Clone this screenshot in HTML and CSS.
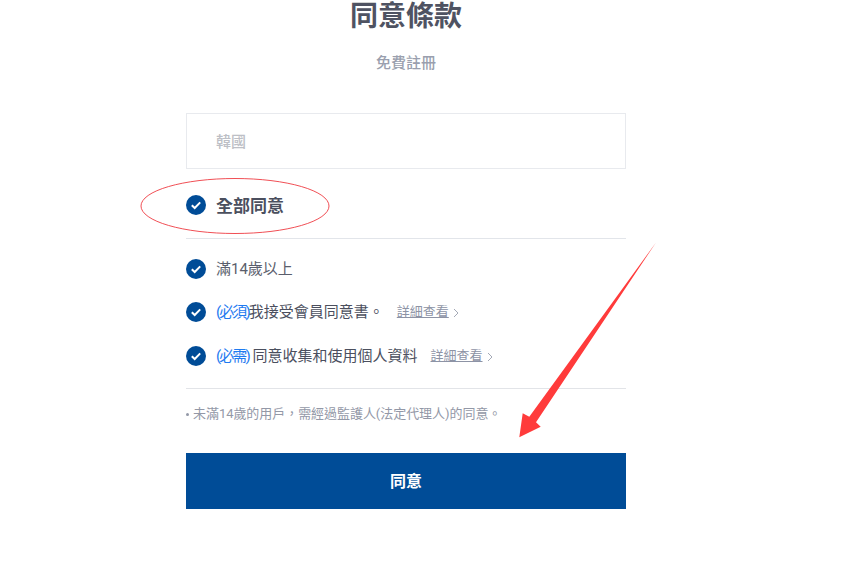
FILE: index.html
```html
<!DOCTYPE html>
<html lang="zh-Hant">
<head>
<meta charset="utf-8">
<title>同意條款</title>
<link rel="stylesheet" href="styles.css">
</head>
<body>
<main class="panel">
  <h1 class="title">同意條款</h1>
  <p class="subtitle">免費註冊</p>
  <div class="country">韓國</div>
  <div class="row row-all">
    <svg class="check" viewBox="0 0 20 20"><circle cx="10" cy="10" r="10" fill="#004c97"/><path d="M5.8 10.2l2.9 2.8 5.5-5.6" fill="none" stroke="#fff" stroke-width="2"/></svg>
    <strong class="all-label">全部同意</strong>
  </div>
  <div class="terms">
    <div class="row row-age">
      <svg class="check" viewBox="0 0 20 20"><circle cx="10" cy="10" r="10" fill="#004c97"/><path d="M5.8 10.2l2.9 2.8 5.5-5.6" fill="none" stroke="#fff" stroke-width="2"/></svg>
      <span class="label muted-label">滿14歲以上</span>
    </div>
    <div class="row row-member">
      <svg class="check" viewBox="0 0 20 20"><circle cx="10" cy="10" r="10" fill="#004c97"/><path d="M5.8 10.2l2.9 2.8 5.5-5.6" fill="none" stroke="#fff" stroke-width="2"/></svg>
      <span class="label"><span class="req">(必須)</span>我接受會員同意書。</span>
      <a class="more" href="#">詳細查看</a>
      <svg class="chev" viewBox="0 0 6 10"><path d="M1 1l4 4-4 4" fill="none" stroke="#a4a9b6"/></svg>
    </div>
    <div class="row row-data">
      <svg class="check" viewBox="0 0 20 20"><circle cx="10" cy="10" r="10" fill="#004c97"/><path d="M5.8 10.2l2.9 2.8 5.5-5.6" fill="none" stroke="#fff" stroke-width="2"/></svg>
      <span class="label"><span class="req">(必需)</span> 同意收集和使用個人資料</span>
      <a class="more" href="#">詳細查看</a>
      <svg class="chev" viewBox="0 0 6 10"><path d="M1 1l4 4-4 4" fill="none" stroke="#a4a9b6"/></svg>
    </div>
  </div>
  <p class="note"><span class="dot"></span>未滿14歲的用戶，需經過監護人(法定代理人)的同意。</p>
  <button class="submit" type="button">同意</button>
</main>
<svg class="overlay" viewBox="0 0 852 581" width="852" height="581">
  <ellipse cx="235" cy="206" rx="94" ry="27.5" fill="none" stroke="#ee3b42" stroke-width="0.9"/>
  <path d="M656 242.5L536 422.3 540.7 426.7 519.3 437.3 522.7 413.3 529.3 416.7Z" fill="#ff3b3b"/>
</svg>
</body>
</html>
```
FILE: styles.css
```css
* { box-sizing: border-box; }
html, body { margin: 0; height: 581px; overflow: hidden; background: #fff; }
body {
  font-family: Roboto, "Noto Sans CJK TC", sans-serif;
  color: #4b4f5e;
  position: relative;
}
.panel { width: 440px; margin-left: 186px; display: flex; flex-direction: column; }
.title {
  margin: 0;
  height: 30px;
  font-size: 28px;
  line-height: 33px;
  font-weight: 700;
  text-align: center;
  color: #4f5362;
}
.subtitle {
  margin: 22px 0 0;
  height: 20px;
  font-size: 15px;
  line-height: 23px;
  font-weight: 500;
  text-align: center;
  color: #9a9fae;
}
.country {
  margin-top: 41px;
  height: 56px;
  border: 1px solid #e8eaee;
  padding-left: 29px;
  font-size: 15px;
  line-height: 56px;
  font-weight: 500;
  color: #bdbfc6;
}
.row { display: flex; align-items: center; }
.check { width: 20px; height: 20px; flex: none; margin-right: 10px; }
.row-all {
  height: 70px;
  border-bottom: 1px solid #e2e5ea;
  padding-top: 3px;
}
.all-label { font-size: 17px; line-height: 20px; margin-top: 2px; font-weight: 700; color: #4b4f5e; }
.terms { display: flex; flex-direction: column; border-bottom: 1px solid #e2e4e8; height: 150px; padding-top: 20px; }
.row-age { height: 20px; }
.row-member { height: 20px; margin-top: 23px; }
.row-data { height: 20px; margin-top: 24px; }
.label { font-size: 15px; line-height: 21px; color: #4b4f5e; white-space: pre; }
.row-age .label, .row-member .label { line-height: 23px; }
.muted-label { color: #5a5e6c; }
.req { color: #1f7bf0; letter-spacing: -1.9px; }
.more {
  font-size: 13px;
  line-height: 22px;
  color: #8d93a5;
  text-decoration: underline;
  margin: 0 4px 0 13px;
}
.row-member .more { line-height: 24px; }
.chev { width: 6px; height: 10px; flex: none; margin-top: 2px; }
.note {
  margin: 15px 0 0;
  height: 20px;
  font-size: 13px;
  line-height: 19px;
  letter-spacing: -0.05px;
  color: #9398a7;
  display: flex;
  align-items: flex-start;
}
.dot { width: 3px; height: 3px; border-radius: 50%; background: #9398a7; margin: 9px 4px 0 0; flex: none; }
.submit {
  margin-top: 29px;
  height: 56px;
  width: 440px;
  border: 0;
  background: #004c97;
  color: #fff;
  font-family: inherit;
  font-size: 16px;
  font-weight: 700;
  padding-bottom: 4px;
}
.overlay { position: absolute; left: 0; top: 0; pointer-events: none; }
```
